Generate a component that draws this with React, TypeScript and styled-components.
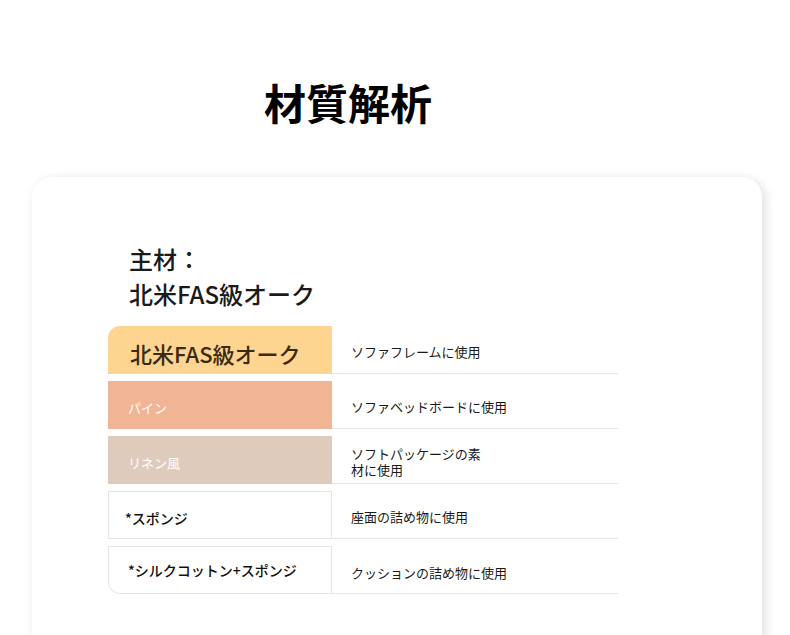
import React from 'react';
import styled, { createGlobalStyle, css } from 'styled-components';

const GlobalStyle = createGlobalStyle`
  html, body {
    margin: 0;
    padding: 0;
    background: #ffffff;
    font-family: "Noto Sans CJK JP", "Noto Sans", sans-serif;
    color: #1a1a1a;
  }
`;

type Tone = 'oak' | 'pine' | 'linen' | 'plain';

interface Material {
  name: string;
  usage: React.ReactNode;
  tone: Tone;
  big?: boolean;
}

const materials: Material[] = [
  { name: '北米FAS級オーク', usage: 'ソファフレームに使用', tone: 'oak', big: true },
  { name: 'パイン', usage: 'ソファベッドボードに使用', tone: 'pine' },
  {
    name: 'リネン風',
    usage: (
      <>
        ソフトパッケージの素
        <br />
        材に使用
      </>
    ),
    tone: 'linen',
  },
  { name: '*スポンジ', usage: '座面の詰め物に使用', tone: 'plain' },
  { name: '*シルクコットン+スポンジ', usage: 'クッションの詰め物に使用', tone: 'plain' },
];

const toneColors: Record<Tone, string> = {
  oak: '#fdd590',
  pine: '#f1b494',
  linen: '#dfcbbb',
  plain: '#ffffff',
};

const Page = styled.div`
  width: 790px;
  height: 635px;
  overflow: hidden;
  padding-top: 76px;
  box-sizing: border-box;
`;

const Title = styled.h1`
  margin: 0 0 49px 264px;
  font-size: 42px;
  line-height: 52px;
  font-weight: 700;
  color: #000;
  letter-spacing: 0;
`;

const Card = styled.section`
  margin-left: 32px;
  width: 730px;
  height: 520px;
  background: #ffffff;
  border-radius: 20px;
  box-shadow: 0 0 10px rgba(0, 0, 0, 0.06), 6px 3px 10px rgba(0, 0, 0, 0.07);
  padding: 64px 0 0 76px;
  box-sizing: border-box;
`;

const Heading = styled.h2`
  margin: 0 0 15px 21px;
  font-size: 24px;
  line-height: 35px;
  font-weight: 500;
  color: #1a1a1a;
`;

const Table = styled.div`
  display: grid;
  grid-template-columns: 224px 286px;
  grid-auto-rows: 48px;
  row-gap: 7px;
`;

const NameCell = styled.div<{ $tone: Tone; $first?: boolean; $last?: boolean }>`
  display: flex;
  align-items: center;
  box-sizing: border-box;
  background: ${({ $tone }) => toneColors[$tone]};
  padding: 5px 0 0 20px;
  font-size: 13px;
  color: #ffffff;
  ${({ $tone }) =>
    $tone === 'plain' &&
    css`
      border: 1px solid #e4e4e4;
      color: #111;
      font-size: 14px;
      font-weight: 500;
      padding-left: 16px;
    `}
  ${({ $first }) =>
    $first &&
    css`
      border-top-left-radius: 12px;
    `}
  ${({ $last }) =>
    $last &&
    css`
      border-bottom-left-radius: 12px;
      padding: 0 0 0 19px;
    `}
`;

const BigName = styled.span`
  font-size: 22px;
  font-weight: 500;
  color: #3a2a12;
  padding-left: 2px;
`;

const UsageCell = styled.div<{ $last?: boolean }>`
  display: flex;
  align-items: center;
  box-sizing: border-box;
  padding: ${({ $last }) => ($last ? '7px' : '5px')} 0 0 19px;
  border-bottom: 1px solid #e6e6e6;
  font-size: 13px;
  line-height: 16px;
  color: #1a1a1a;
`;

export default function App() {
  return (
    <>
      <GlobalStyle />
      <Page>
        <Title>材質解析</Title>
        <Card>
          <Heading>
            主材：
            <br />
            北米FAS級オーク
          </Heading>
          <Table>
            {materials.map((m, i) => {
              const last = i === materials.length - 1;
              return (
                <React.Fragment key={i}>
                  <NameCell $tone={m.tone} $first={i === 0} $last={last}>
                    {m.big ? <BigName>{m.name}</BigName> : m.name}
                  </NameCell>
                  <UsageCell $last={last}>{m.usage}</UsageCell>
                </React.Fragment>
              );
            })}
          </Table>
        </Card>
      </Page>
    </>
  );
}
